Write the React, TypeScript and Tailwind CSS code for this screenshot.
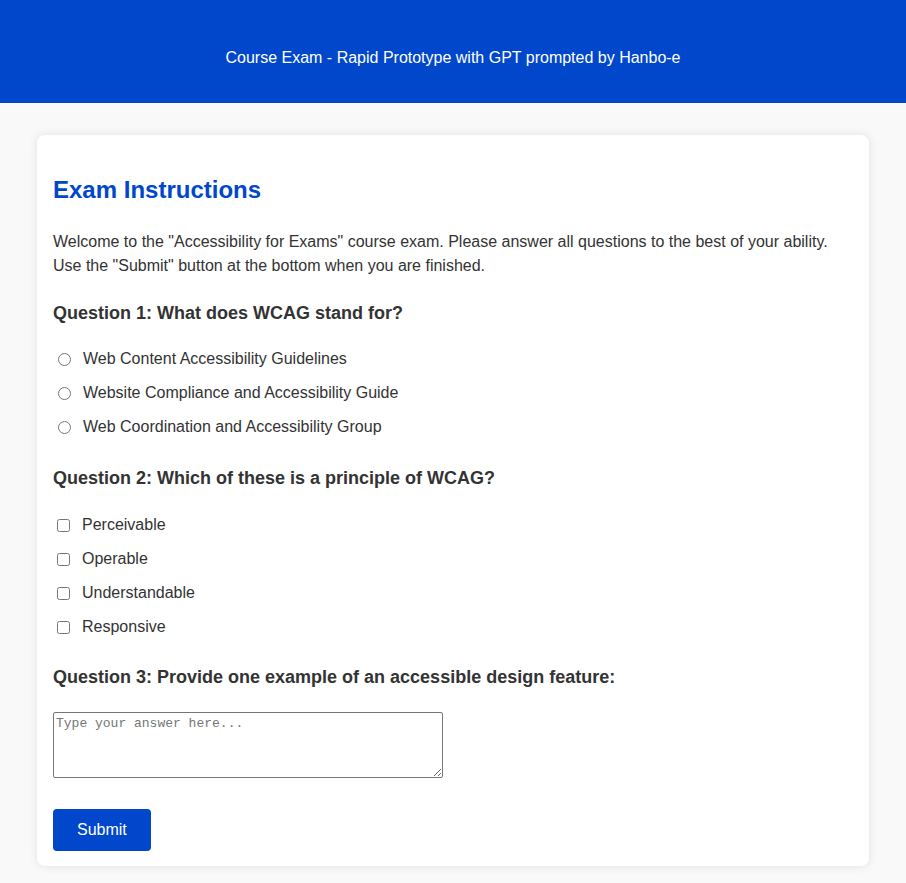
import { useState } from "react";

const q1Options = [
	"Web Content Accessibility Guidelines",
	"Website Compliance and Accessibility Guide",
	"Web Coordination and Accessibility Group",
];

const q2Options = ["Perceivable", "Operable", "Understandable", "Responsive"];

export default function App() {
	const [q1, setQ1] = useState<string | null>(null);
	const [q2, setQ2] = useState<string[]>([]);
	const [q3, setQ3] = useState("");

	function toggle(opt: string) {
		setQ2((prev) =>
			prev.includes(opt) ? prev.filter((o) => o !== opt) : [...prev, opt]
		);
	}

	return (
		<div className="min-h-screen bg-[#f9f9f9] font-['Liberation_Sans',Arial,sans-serif] text-[#333] pb-4">
			<header className="h-[103px] bg-[#0047cc] text-white flex items-center justify-center text-base pt-[12px]">
				Course Exam - Rapid Prototype with GPT prompted by Hanbo-e
			</header>

			<main className="pt-[32px]">
				<form
					className="w-[832px] mx-auto bg-white rounded-lg shadow-[0_0_10px_rgba(0,0,0,0.1)] px-4 pt-[41px] pb-[15px]"
					onSubmit={(e) => e.preventDefault()}
				>
					<h2 className="text-[24px] leading-[28px] font-bold text-[#0047cc]">
						Exam Instructions
					</h2>
					<p className="mt-[26px] text-base leading-[24px]">
						Welcome to the "Accessibility for Exams" course exam. Please answer
						all questions to the best of your ability.
						<br />
						Use the "Submit" button at the bottom when you are finished.
					</p>

					{/* question 1 */}
					<h3 className="mt-[23px] text-[18px] leading-[24px] font-bold">
						Question 1: What does WCAG stand for?
					</h3>
					<div className="mt-[22px] flex flex-col gap-[10px]">
						{q1Options.map((opt) => (
							<label key={opt} className="flex items-center h-[24px] leading-[24px]">
								<input
									type="radio"
									name="q1"
									className="w-[13px] h-[13px] ml-[5px] mr-[12px]"
									checked={q1 === opt}
									onChange={() => setQ1(opt)}
								/>
								{opt}
							</label>
						))}
					</div>

					{/* question 2 */}
					<h3 className="mt-[27px] text-[18px] leading-[24px] font-bold">
						Question 2: Which of these is a principle of WCAG?
					</h3>
					<div className="mt-[23px] flex flex-col gap-[10px]">
						{q2Options.map((opt) => (
							<label key={opt} className="flex items-center h-[24px] leading-[24px]">
								<input
									type="checkbox"
									className="w-[13px] h-[13px] ml-[4px] mr-[12px]"
									checked={q2.includes(opt)}
									onChange={() => toggle(opt)}
								/>
								{opt}
							</label>
						))}
					</div>

					{/* question 3 */}
					<h3 className="mt-[26px] text-[18px] leading-[24px] font-bold">
						Question 3: Provide one example of an accessible design feature:
					</h3>
					<textarea
						className="mt-[23px] block w-[390px] h-[66px] border border-[#767676] rounded-[2px] px-[2px] py-[3px] font-['Liberation_Mono',monospace] text-[13px] leading-[16px] placeholder:text-[#757575]"
						placeholder="Type your answer here..."
						value={q3}
						onChange={(e) => setQ3(e.target.value)}
					/>

					<button
						type="submit"
						className="mt-[31px] block bg-[#0047cc] text-white text-base leading-[18px] px-6 py-3 rounded"
					>
						Submit
					</button>
				</form>
			</main>
		</div>
	);
}
